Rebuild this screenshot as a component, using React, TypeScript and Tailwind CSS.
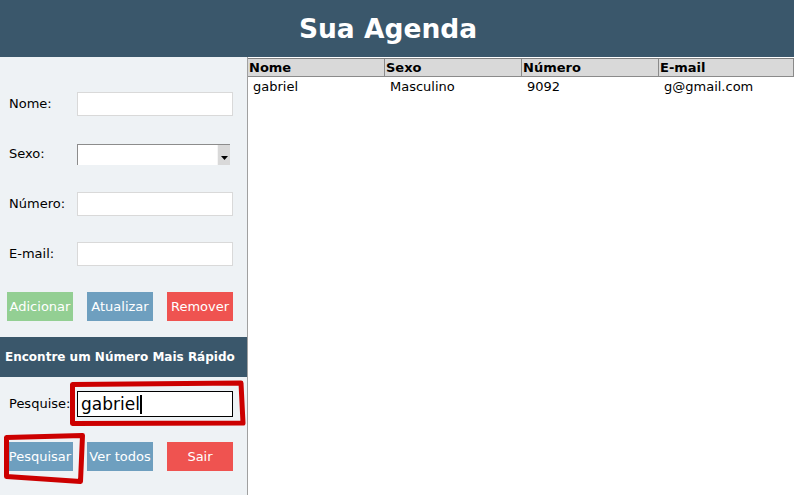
import React from 'react';

const font = { fontFamily: '"DejaVu Sans", Verdana, sans-serif' };

const contacts = [
    { nome: 'gabriel', sexo: 'Masculino', numero: '9092', email: 'g@gmail.com' },
];

export default function App() {
    return (
        <div className="relative w-[794px] h-[495px] overflow-hidden bg-white text-[13px] text-black" style={font}>
            {/* Header */}
            <div className="h-[57px] bg-[#3a576b] flex items-center justify-center">
                <h1 className="text-[26.5px] font-bold text-white pr-[18px]">Sua Agenda</h1>
            </div>

            <div className="flex h-[438px]">
                {/* Left panel */}
                <div className="w-[247px] shrink-0 bg-[#eef2f5] flex flex-col">
                    <div className="flex flex-col gap-[26px] pt-[35px]">
                        <FormRow label="Nome:" />
                        <SelectRow label="Sexo:" />
                        <FormRow label="Número:" />
                        <FormRow label="E-mail:" />
                    </div>

                    <div className="flex gap-[14px] px-[7px] mt-[26px]">
                        <Btn label="Adicionar" color="bg-[#93cf93]" />
                        <Btn label="Atualizar" color="bg-[#6e9fbf]" />
                        <Btn label="Remover" color="bg-[#ef5350]" />
                    </div>

                    <div className="mt-[16px] h-[40px] bg-[#3a576b] flex items-center pl-[5px]">
                        <span className="text-[12px] font-bold text-white">Encontre um Número Mais Rápido</span>
                    </div>

                    <div className="flex items-center mt-[14px] pl-[9px]">
                        <span className="w-[68px]">Pesquise:</span>
                        <div className="w-[156px] h-[26px] border border-black bg-white flex items-center pl-[3px] text-[17px] leading-none">
                            gabriel<span className="inline-block w-[2px] h-[19px] bg-black" />
                        </div>
                    </div>

                    <div className="flex gap-[14px] px-[7px] mt-[25px]">
                        <Btn label="Pesquisar" color="bg-[#6e9fbf]" />
                        <Btn label="Ver todos" color="bg-[#6e9fbf]" />
                        <Btn label="Sair" color="bg-[#ef5350]" />
                    </div>
                </div>

                {/* Table */}
                <div className="flex-1 border-l border-[#a0a0a0] pt-[1px]">
                    <div className="grid grid-cols-[137px_137px_137px_1fr] border-t border-[#808080]">
                        {['Nome', 'Sexo', 'Número', 'E-mail'].map(h => (
                            <div key={h} className="h-[18px] bg-[#d9d9d9] border-r border-b border-[#8a8a8a] font-bold leading-[17px] pl-[1px]">
                                {h}
                            </div>
                        ))}
                        {contacts.map(c => (
                            <React.Fragment key={c.nome}>
                                <div className="pl-[5px] h-[19px] leading-[19px]">{c.nome}</div>
                                <div className="pl-[5px] h-[19px] leading-[19px]">{c.sexo}</div>
                                <div className="pl-[5px] h-[19px] leading-[19px]">{c.numero}</div>
                                <div className="pl-[5px] h-[19px] leading-[19px]">{c.email}</div>
                            </React.Fragment>
                        ))}
                    </div>
                </div>
            </div>

            {/* Red annotation marks */}
            <svg className="absolute inset-0 pointer-events-none" width="794" height="495">
                <polygon points="72.5,384.5 241,383 243,423 72.5,423.5" fill="none" stroke="#cc0000" strokeWidth="5" strokeLinejoin="round" />
                <polygon points="6.5,437.5 82.5,435.5 80.5,481.5 6.5,476.5" fill="none" stroke="#cc0000" strokeWidth="5" strokeLinejoin="round" />
            </svg>
        </div>
    );
}

const FormRow: React.FC<{ label: string }> = ({ label }) => (
    <div className="flex items-center pl-[9px] h-[24px]">
        <span className="w-[68px]">{label}</span>
        <div className="w-[156px] h-[24px] bg-white border border-[#d9d9d9]" />
    </div>
);

const SelectRow: React.FC<{ label: string }> = ({ label }) => (
    <div className="flex items-center pl-[9px] h-[24px]">
        <span className="w-[68px]">{label}</span>
        <div className="w-[153px] h-[21px] bg-white border-t border-l border-[#8c8c8c] flex justify-end">
            <div className="w-[13px] h-full bg-[#d9d9d9] border-l border-[#f5f5f5] flex items-end justify-center pb-[5px]">
                <svg width="7" height="4" viewBox="0 0 7 4"><polygon points="0,0 7,0 3.5,4" fill="#000" /></svg>
            </div>
        </div>
    </div>
);

const Btn: React.FC<{ label: string; color: string }> = ({ label, color }) => (
    <button className={`w-[66px] h-[29px] ${color} text-white text-[13px] flex items-center justify-center`} style={font}>
        {label}
    </button>
);
